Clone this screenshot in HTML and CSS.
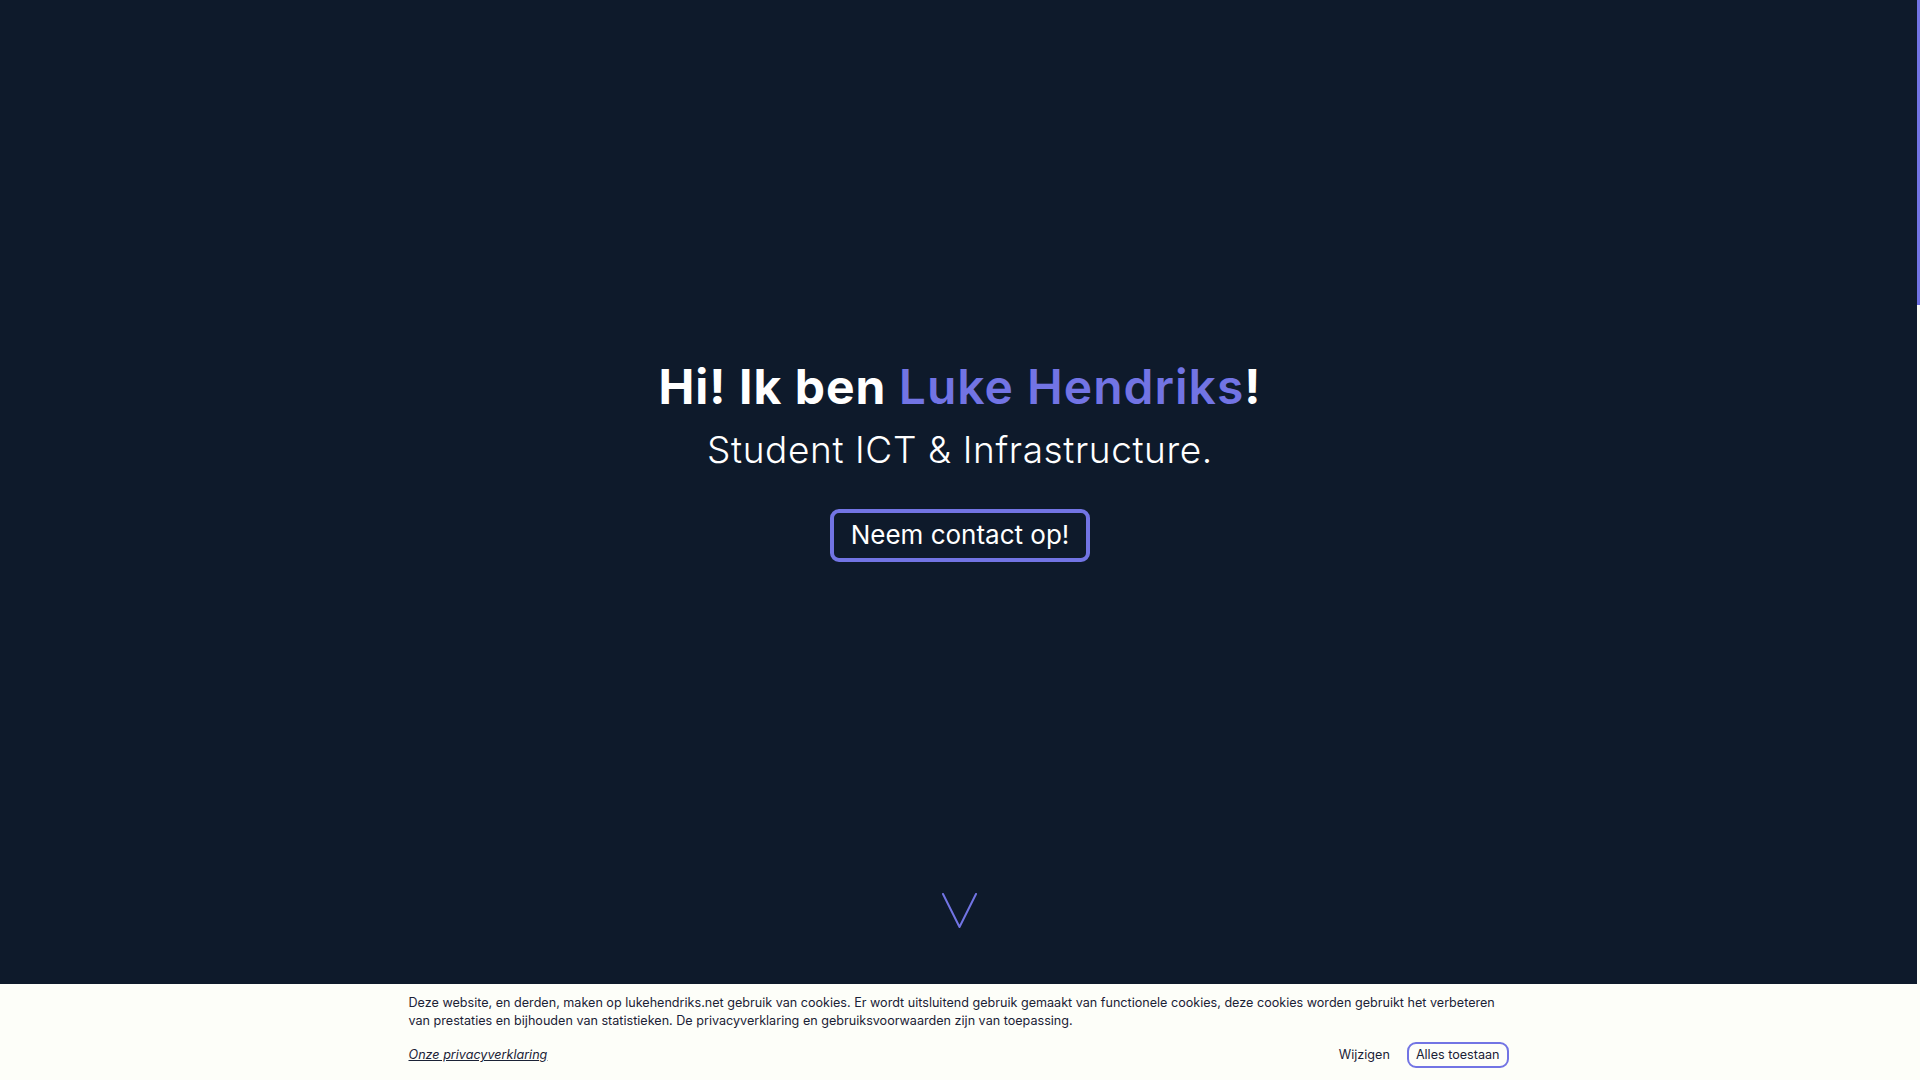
FILE: index.html
```html
<!DOCTYPE html>
<html lang="nl">
<head>
<meta charset="utf-8">
<title>Luke Hendriks</title>
<link rel="stylesheet" href="styles.css">
</head>
<body>
<main class="main">
  <section class="hero">
    <h1 class="title">Hi! Ik ben <span class="accent">Luke Hendriks</span>!</h1>
    <p class="subtitle">Student ICT &amp; Infrastructure.</p>
    <a class="contact-btn" href="#contact">Neem contact op!</a>
    <a class="scroll-down" href="#about" aria-label="Scroll naar beneden">
      <svg width="36" height="35" viewBox="0 0 36 35"><polyline points="1,1 17.5,34 34,1" fill="none" stroke="#7274e4" stroke-width="2" stroke-linejoin="round" stroke-linecap="round"/></svg>
    </a>
  </section>
  <div class="cookie-bar">
    <div class="cookie-inner">
      <p class="cookie-text">Deze website, en derden, maken op lukehendriks.net gebruik van cookies. Er wordt uitsluitend gebruik gemaakt van functionele cookies, deze cookies worden gebruikt het verbeteren van prestaties en bijhouden van statistieken. De privacyverklaring en gebruiksvoorwaarden zijn van toepassing.</p>
      <div class="cookie-actions">
        <a class="privacy-link" href="#privacy">Onze privacyverklaring</a>
        <div class="cookie-buttons">
          <button class="btn-change">Wijzigen</button>
          <button class="btn-accept">Alles toestaan</button>
        </div>
      </div>
    </div>
  </div>
</main>
<div class="scrollbar"><div class="scrollbar-thumb"></div></div>
</body>
</html>
```

FILE: styles.css
```css
* { box-sizing: border-box; }
html, body { margin: 0; padding: 0; height: 100%; overflow: hidden; }
body {
  font-family: Inter, "Noto Sans", sans-serif;
  background: #0e1a2b;
  color: #ffffff;
}
.main {
  height: 1080px;
  display: flex;
  flex-direction: column;
}
.hero {
  flex: 1;
  display: flex;
  flex-direction: column;
  align-items: center;
  padding-top: 358px;
  background: #0e1a2b;
}
.title {
  margin: 0;
  font-size: 48px;
  line-height: 58px;
  font-weight: 700;
  letter-spacing: 1px;
  color: #ffffff;
}
.accent { color: #7274e4; font-weight: 600; }
.subtitle {
  margin: 11px 0 0;
  font-size: 37px;
  line-height: 45px;
  font-weight: 300;
  letter-spacing: 0.6px;
  color: #ffffff;
}
.contact-btn {
  margin-top: 37px;
  display: inline-block;
  border: 4px solid #7274e4;
  border-radius: 9px;
  padding: 6px 17px 8px;
  font-size: 26px;
  line-height: 31px;
  font-weight: 400;
  color: #ffffff;
  text-decoration: none;
}
.scroll-down {
  margin-top: auto;
  margin-bottom: 56px;
  display: block;
  line-height: 0;
}
.cookie-bar {
  height: 96px;
  padding-right: 3px;
  background: #fdfef9;
  color: #1b2236;
}
.cookie-inner {
  width: 1100px;
  margin: 0 auto;
  padding-top: 10px;
}
.cookie-text {
  margin: 0;
  max-width: 1090px;
  font-size: 12.6px;
  line-height: 18px;
}
.cookie-actions {
  margin-top: 12px;
  display: flex;
  justify-content: space-between;
  align-items: center;
}
.privacy-link {
  font-size: 12.6px;
  line-height: 18px;
  font-style: italic;
  color: #1b2236;
  text-decoration: underline;
}
.cookie-buttons {
  display: flex;
  align-items: center;
  gap: 17px;
}
.btn-change, .btn-accept {
  font-family: inherit;
  font-size: 12.6px;
  line-height: 18px;
  color: #1b2236;
  background: transparent;
  cursor: pointer;
}
.btn-change {
  border: none;
  padding: 0;
}
.btn-accept {
  border: 2px solid #7274e4;
  border-radius: 9px;
  padding: 2px 7px;
}
.scrollbar {
  position: fixed;
  top: 0;
  right: 0;
  width: 3px;
  height: 100%;
  background: #fdfef9;
}
.scrollbar-thumb {
  height: 305px;
  background: #7274e4;
}
```
